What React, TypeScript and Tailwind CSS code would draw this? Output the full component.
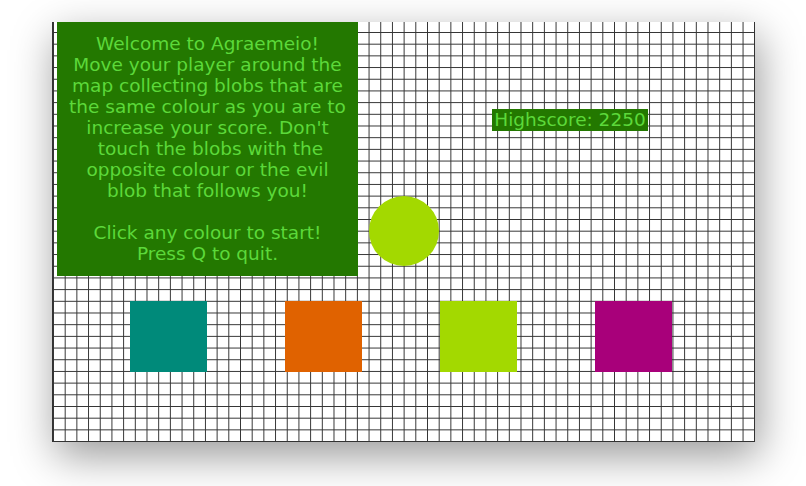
import React from "react";

const LINES = [
  "Welcome to Agraemeio!",
  "Move your player around the",
  "map collecting blobs that are",
  "the same colour as you are to",
  "increase your score. Don't",
  " touch the blobs with the",
  "opposite colour or the evil",
  "blob that follows you!",
  "",
  "Click any colour to start!",
  "Press Q to quit.",
];

const SWATCHES = ["bg-[#008a7a]", "bg-[#e06200]", "bg-[#a3d900]", "bg-[#a8007a]"];

export default function App() {
  return (
    <div className="w-[806px] h-[486px] bg-white overflow-hidden font-['DejaVu_Sans',sans-serif]">
      {/* game window */}
      <div className="relative ml-[52px] mt-[22px] w-[703px] h-[420px] bg-white border-l border-r border-b border-[#333] shadow-[4px_14px_40px_rgba(0,0,0,0.4)] bg-[linear-gradient(to_right,#333_1px,transparent_1px),linear-gradient(to_bottom,#333_1px,transparent_1px)] bg-[size:11.7px_11.7px] bg-[position:0_10px]">
        {/* intro panel */}
        <div className="absolute left-[4px] top-0 w-[301px] h-[254px] bg-[#237800] pt-[11px] text-[#5cd93a] text-[18.5px] leading-[21px] text-center">
          {LINES.map((line, i) => (
            <div key={i} className="h-[21px] whitespace-pre">
              {line}
            </div>
          ))}
        </div>

        {/* highscore */}
        <div className="absolute left-[439px] top-[87px] w-[156px] h-[22px] bg-[#237800] text-[#5cd93a] text-[18.5px] leading-[22px] text-center whitespace-nowrap">
          Highscore: 2250
        </div>

        {/* player */}
        <div className="absolute left-[316px] top-[174px] w-[70px] h-[70px] rounded-full bg-[#a3d900]" />

        {/* colour choices */}
        <div className="absolute left-[77px] top-[279px] flex gap-[78px]">
          {SWATCHES.map((c) => (
            <div key={c} className={`w-[77px] h-[71px] ${c}`} />
          ))}
        </div>
      </div>
    </div>
  );
}
